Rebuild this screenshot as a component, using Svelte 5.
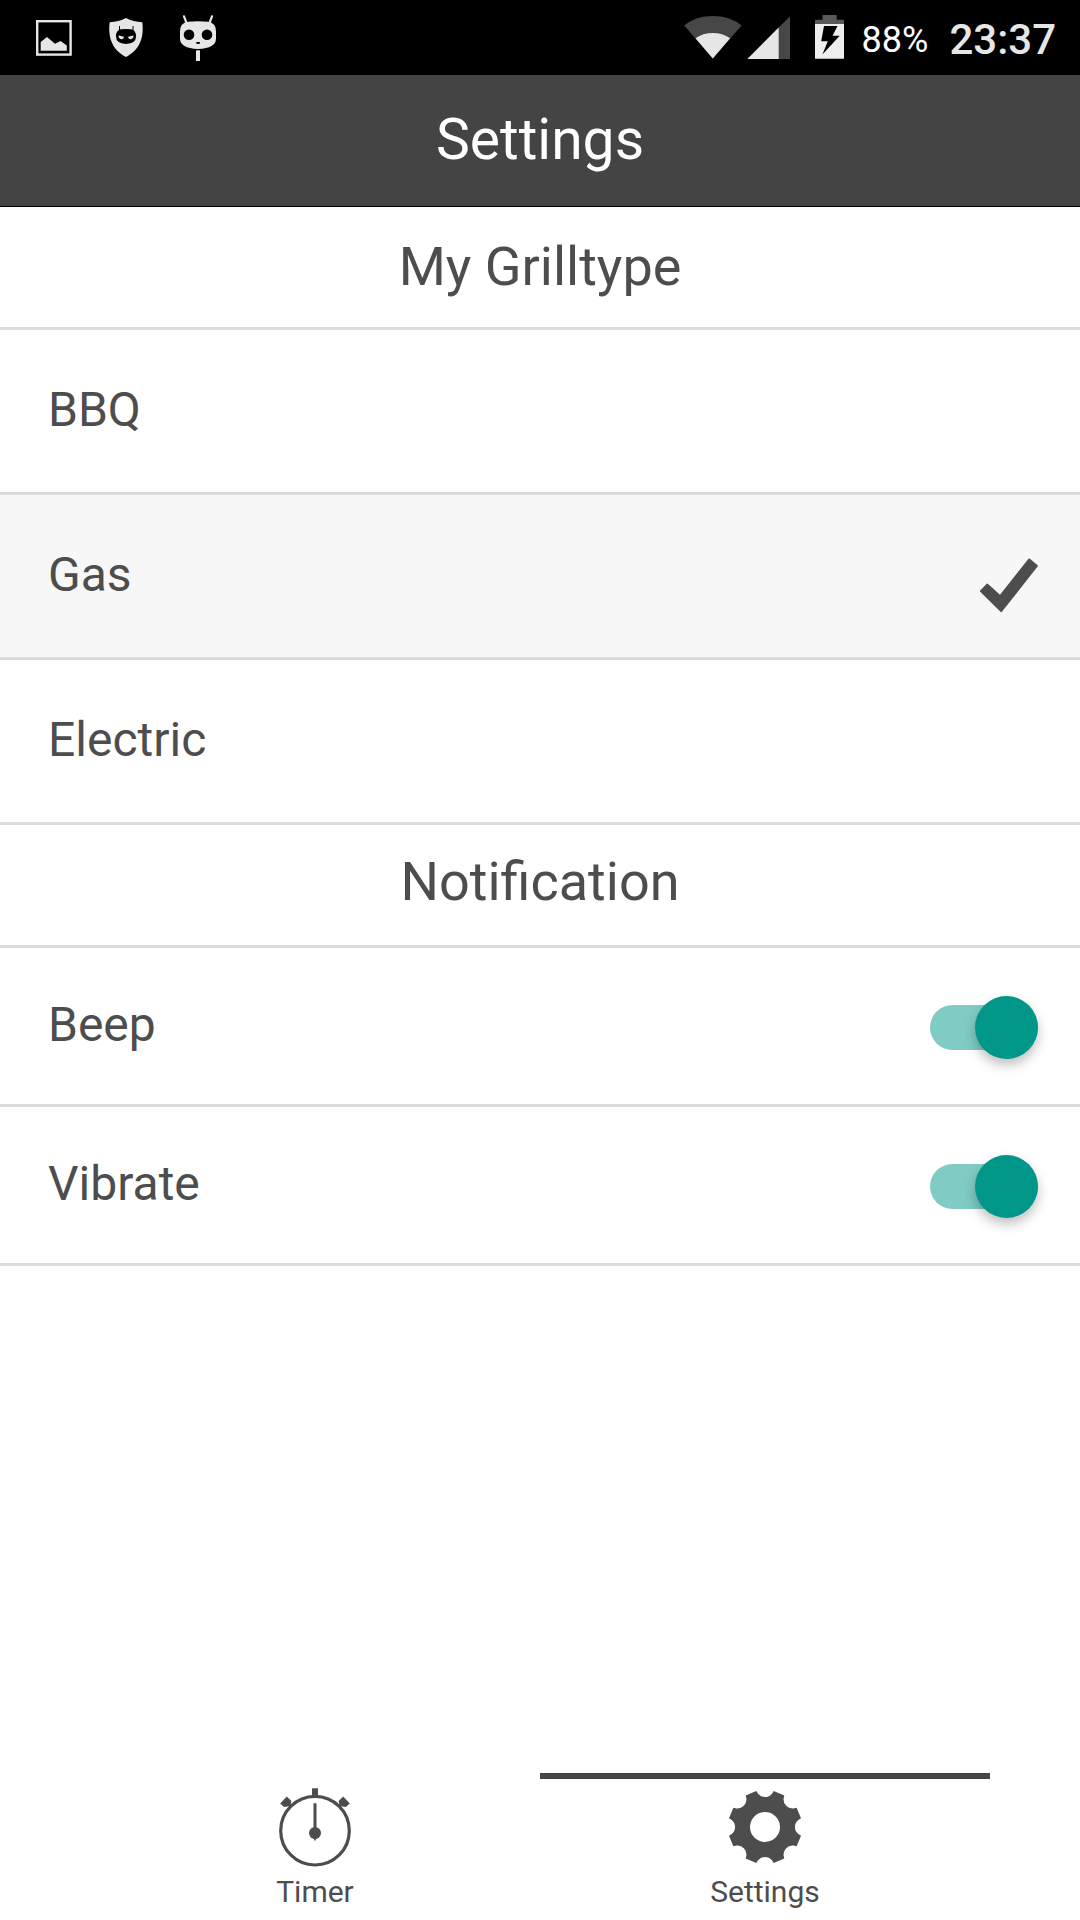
<script>
  let grillTypes = ['BBQ', 'Gas', 'Electric'];
  let selected = $state('Gas');
  let activeTab = $state('Settings');

  let notifications = $state([
    { label: 'Beep', on: true },
    { label: 'Vibrate', on: true }
  ]);

  // Outline of the cog, one notch for each of the eight gaps
  function cogPath() {
    let d = '';

    for (let i = 0; i < 8; i++) {
      const a = (i * Math.PI) / 4;
      const at = (x, y) =>
        `${(x * Math.cos(a) - y * Math.sin(a)).toFixed(2)} ${(x * Math.sin(a) + y * Math.cos(a)).toFixed(2)}`;

      d += `${i ? 'L' : 'M'}${at(-8.7, -36)}L${at(-7, -33.3)}A9 9 0 0 0 ${at(7, -33.3)}L${at(8.7, -36)}`;
    }

    return d + 'ZM15 0A15 15 0 1 0 -15 0A15 15 0 1 0 15 0Z';
  }
</script>

<div class="screen">
  <div class="status-bar">
    <div class="status-icons">
      <svg width="36" height="75" viewBox="36 0 36 75">
        <rect x="37.2" y="21.2" width="33.4" height="33.4" fill="none" stroke="#e6e6e6" stroke-width="2.4" />
        <path d="M40.7 42L47 37l8 6.8 5.6-2.8 6.2 4.5v5.2H40.7z" fill="#e6e6e6" />
      </svg>
      <svg width="36" height="75" viewBox="108 0 36 75">
        <path d="M126 18c5 3 10 3.600 16.300 4.200C144 36 141 49 126 57c-15-8-18-21-16.300-34.800C116 21.600 121 21 126 18z" fill="#e6e6e6" />
        <path d="M119.500 26v5M133 26v5" stroke="#000" stroke-width="1" />
        <path d="M121 29.300q5-.8 10 0 5 .7 5 7.200 0 7-10 7.400-10-.4-10-7.400 0-6.500 5-7.200z" fill="#000" />
        <path d="M118.500 35.500l5.500 1.200q-.3 2.600-2.600 2.600-2.900-.5-2.900-3.800zM133.500 35.500l-5.500 1.200q.3 2.600 2.600 2.600 2.900-.5 2.900-3.800z" fill="#e6e6e6" />
      </svg>
      <svg width="36" height="75" viewBox="180 0 36 75">
        <path d="M184 16.400l2.300 6M212 16.400l-2.300 6" stroke="#e6e6e6" stroke-width="2.200" stroke-linecap="round" />
        <path d="M188 21.700q10-1 20 0 8 1 8 10v7q0 9.300-18 10.300-18-1-18-10.300v-7q0-9 8-10z" fill="#e6e6e6" />
        <circle cx="189" cy="34.700" r="5.300" />
        <circle cx="207" cy="34.700" r="5.300" />
        <path d="M196.200 42h3.800v1.200l-1.200.9h-1.500l-1.100-.9z" />
        <path d="M196 50.300h4V61h-4z" fill="#e6e6e6" />
      </svg>
    </div>

    <div class="status-info">
      <svg width="58" height="75" viewBox="684 0 58 75">
        <path d="M712.800 58.600L684.200 25.500C692 19 702 16 712.800 16s21 3 28.800 9.500z" fill="#474747" />
        <path d="M712.800 58.600L695.500 38.300q7.500-5.300 17.300-5.300t17.300 5.300z" fill="#e6e6e6" />
      </svg>
      <svg class="signal" width="43" height="75" viewBox="747 0 43 75">
        <path d="M747.400 59L790 16.300V59z" fill="#474747" />
        <path d="M747.400 59l31.300-31.400V59z" fill="#e6e6e6" />
      </svg>
      <svg class="battery" width="29" height="75" viewBox="815 0 29 75">
        <path d="M822.500 15h14.200v4.700h7.300V24h-29v-4.300h7.500z" fill="#595959" />
        <path d="M815 24h29v34.800h-29z" fill="#eee" />
        <path d="M824 26h13.500l-5 9.800h7.200L822.400 54.600l5.400-13.400h-6.600z" />
      </svg>
      <span class="percent">88%</span>
      <span class="clock">23:37</span>
    </div>
  </div>

  <header class="title-bar">Settings</header>

  <main>
    <h2>My Grilltype</h2>
    {#each grillTypes as type}
      <button class="row" class:selected={selected === type} type="button" onclick={() => (selected = type)}>
        <span>{type}</span>
        {#if selected === type}
          <svg class="check" width="60" height="56" viewBox="0 0 60 56">
            <path
              d="M2.700 34.100L9.300 27.200 22 38.900 51.100 2.200 59.200 8.900 23.300 54.400z"
              fill="#4d4d4d"
              stroke="#4d4d4d"
              stroke-width="1.500"
              stroke-linejoin="round"
            />
          </svg>
        {/if}
      </button>
    {/each}

    <h2 class="raised">Notification</h2>
    {#each notifications as item}
      <label class="row toggle-row">
        <span>{item.label}</span>
        <input type="checkbox" bind:checked={item.on} />
        <span class="track"><span class="knob"></span></span>
      </label>
    {/each}
  </main>

  <nav>
    <button class="tab" class:active={activeTab === 'Timer'} type="button" onclick={() => (activeTab = 'Timer')}>
      <svg width="80" height="80" viewBox="-40 -40 80 80">
        <g fill="#4d4d4d">
          <circle cy="5.700" r="34.300" fill="none" stroke="#4d4d4d" stroke-width="3.200" />
          <path d="M-3-36.700h6v8h-6z" />
          <path d="M-34.800-21.500l6.600-7 4.600 4.400-1 5-6.200 1.200zM34.800-21.500l-6.600-7-4.600 4.400 1 5 6.200 1.200z" />
          <path d="M-1.500-21.800h3v35L0 16.300l-1.500-3z" />
          <circle cy="8" r="6" />
        </g>
      </svg>
      <span>Timer</span>
    </button>
    <button class="tab" class:active={activeTab === 'Settings'} type="button" onclick={() => (activeTab = 'Settings')}>
      <svg width="80" height="80" viewBox="-40 -42 80 80">
        <path d={cogPath()} fill="#4d4d4d" fill-rule="evenodd" />
      </svg>
      <span>Settings</span>
    </button>
  </nav>
</div>

<style>
  :global(body) {
    background: #fff;
    margin: 0;
  }

  .screen {
    color: #4d4d4d;
    display: flex;
    flex-direction: column;
    font-family: Roboto, sans-serif;
    height: 1920px;
    width: 1080px;
  }

  svg {
    display: block;
    flex: none;
    overflow: visible;
  }

  button {
    background: none;
    border: none;
    color: inherit;
    font-family: inherit;
    margin: 0;
    padding: 0;
  }

  .status-bar {
    background: #000;
    box-sizing: border-box;
    display: flex;
    height: 75px;
    justify-content: space-between;
    padding: 0 24px 0 36px;
  }

  .status-icons {
    display: flex;
    gap: 36px;
  }

  .status-info {
    color: #e6e6e6;
    display: flex;
  }

  .signal {
    margin-left: 5px;
  }

  .battery {
    margin-left: 25px;
  }

  .percent {
    color: #fff;
    font-size: 36px;
    line-height: 80px;
    margin-left: 18px;
    white-space: nowrap;
  }

  .clock {
    font-size: 42px;
    font-weight: 500;
    line-height: 79px;
    margin-left: 21px;
  }

  .title-bar {
    background: #444;
    border-bottom: 1px solid #000;
    color: #fff;
    font-size: 57px;
    height: 131px;
    line-height: 129px;
    text-align: center;
  }

  h2 {
    border-bottom: 3px solid #dcdcdc;
    font-size: 54px;
    font-weight: 400;
    height: 120px;
    line-height: 119px;
    margin: 0;
    text-align: center;
  }

  h2.raised {
    line-height: 113px;
  }

  .row {
    align-items: center;
    border-bottom: 3px solid #dcdcdc;
    box-sizing: border-box;
    display: flex;
    font-size: 48px;
    height: 165px;
    justify-content: space-between;
    line-height: 60px;
    padding: 0 42px 3px 48px;
    text-align: left;
    width: 100%;
  }

  .row.selected {
    background: #f7f7f7;
  }

  .check {
    margin-top: 20px;
  }

  .toggle-row {
    height: 159px;
  }

  .toggle-row input {
    display: none;
  }

  .track {
    align-items: center;
    background: #bbb;
    border-radius: 23px;
    display: flex;
    height: 45px;
    margin-top: 5px;
    width: 108px;
  }

  .knob {
    background: #f1f1f1;
    border-radius: 50%;
    box-shadow: 0 6px 12px rgba(0, 0, 0, 0.25);
    flex: none;
    height: 63px;
    width: 63px;
  }

  input:checked + .track {
    background: #80cbc4;
    justify-content: flex-end;
  }

  input:checked + .track .knob {
    background: #009688;
  }

  nav {
    display: flex;
    justify-content: center;
    margin-top: auto;
  }

  .tab {
    align-items: center;
    border-top: 6px solid transparent;
    box-sizing: border-box;
    display: flex;
    flex-direction: column;
    font-size: 30px;
    gap: 9px;
    height: 147px;
    line-height: 36px;
    padding-top: 6px;
    width: 450px;
  }

  .tab.active {
    border-top-color: #444;
  }
</style>
